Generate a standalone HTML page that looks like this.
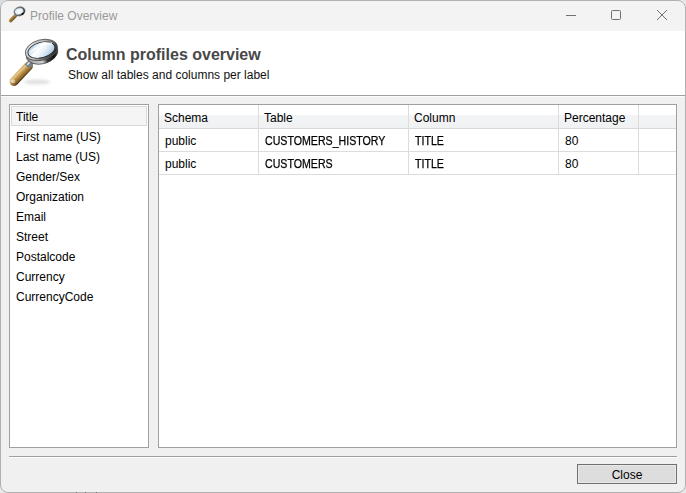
<!DOCTYPE html>
<html><head><meta charset="utf-8">
<style>
*{margin:0;padding:0;box-sizing:border-box}
html,body{width:686px;height:493px;overflow:hidden;background:#e9e9e9}
body{font-family:"Liberation Sans",sans-serif;font-size:12px;color:#000;position:relative}
.a{position:absolute}
.win{left:0;top:0;width:686px;height:493px;border-radius:8px;background:#f0f0f0;overflow:hidden}
.frame{left:0;top:0;width:686px;height:493px;border:1px solid #b0b0b0;border-radius:8px}
.title{left:0;top:0;width:686px;height:31px;background:#f3f3f3}
.ttext{left:30px;top:9px;color:#999;white-space:nowrap}
.hdr{left:0;top:31px;width:686px;height:64px;background:#fff}
.h1{left:66px;top:46px;font-size:16px;font-weight:bold;color:#484848;white-space:nowrap}
.h2{left:68px;top:68px;color:#111;white-space:nowrap}
.list{left:9px;top:104px;width:140px;height:344px;background:#fff;border:1px solid #a0a0a0}
.item{position:absolute;left:6px;height:20px;line-height:22px;white-space:nowrap}
.sel{position:absolute;left:1px;top:1px;width:136px;height:20px;background:#f5f5f5;border:1px solid #dadada}
.tbl{left:158px;top:104px;width:519px;height:344px;background:#fff;border:1px solid #a0a0a0}
.th{position:absolute;left:0;top:0;width:517px;height:24px;background:linear-gradient(#fff 0,#fff 9.5px,#f3f4f6 10.5px,#f0f1f3 23px);border-bottom:1px solid #d8d8d8}
.vl{position:absolute;width:1px;background:#dcdcdc;top:0;height:70px}
.hl{position:absolute;height:1px;background:#dcdcdc;left:0;width:517px}
.c{position:absolute;white-space:nowrap}
.uc{display:inline-block;transform:scaleX(0.885);transform-origin:0 0;-webkit-text-stroke:0.25px #000}
.btn{left:577px;top:464px;width:100px;height:20px;background:#dddddd;border:1px solid #707070;box-shadow:inset 0 0 0 1px #e9e9e9;text-align:center;line-height:20px}
</style></head><body>
<div class="a" style="left:0;top:0;width:10px;height:10px;background:#d2dde6"></div>
<div class="a win">
  <div class="a title"></div>
  <div class="a hdr"></div>
  <div class="a" style="left:0;top:95px;width:686px;height:1px;background:#a0a0a0"></div>
  <div class="a" style="left:0;top:96px;width:686px;height:1px;background:#fcfcfc"></div>
  <div class="a" style="left:9px;top:456px;width:668px;height:1px;background:#a0a0a0"></div>
  <div class="a" style="left:9px;top:457px;width:668px;height:1px;background:#fff"></div>
</div>
<div class="a frame"></div>
<div class="a" style="left:76px;top:492px;width:1px;height:1px;background:#707070"></div>
<div class="a" style="left:85px;top:492px;width:1px;height:1px;background:#707070"></div>
<div class="a" style="left:96px;top:492px;width:1px;height:1px;background:#707070"></div>

<!-- small title icon -->
<svg class="a" style="left:6px;top:4px" width="22" height="22" viewBox="6 4 22 22">
  <defs>
    <linearGradient id="sh" gradientUnits="userSpaceOnUse" x1="11" y1="16" x2="14.5" y2="19.5"><stop offset="0" stop-color="#dcb878"/><stop offset="0.5" stop-color="#b08444"/><stop offset="1" stop-color="#5e4014"/></linearGradient>
    <radialGradient id="sl" cx="0.45" cy="0.5" r="0.6"><stop offset="0" stop-color="#ffffff"/><stop offset="0.6" stop-color="#e8f1f8"/><stop offset="1" stop-color="#a9c7e2"/></radialGradient>
  </defs>
  <line x1="15.6" y1="15.6" x2="10.6" y2="20.6" stroke="url(#sh)" stroke-width="3.6" stroke-linecap="round"/>
  <path d="M10.6 18.8l1.8 1.8M11.8 17.6l1.8 1.8M13 16.4l1.8 1.8M14.2 15.2l1.8 1.8" stroke="#7a5018" stroke-width="0.7" opacity="0.8"/>
  <line x1="15.2" y1="16" x2="16.6" y2="14.6" stroke="#9aa6b0" stroke-width="2.4"/>
  <linearGradient id="srg" gradientUnits="userSpaceOnUse" x1="15" y1="7" x2="24" y2="16"><stop offset="0" stop-color="#b0b0b0"/><stop offset="0.5" stop-color="#707070"/><stop offset="1" stop-color="#1a1a1a"/></linearGradient>
  <ellipse cx="19.5" cy="11.4" rx="5.6" ry="4.4" transform="rotate(-18 19.5 11.4)" fill="url(#srg)" stroke="#3a3a3a" stroke-width="0.5"/>
  <ellipse cx="19.3" cy="11.3" rx="4.3" ry="3.1" transform="rotate(-18 19.3 11.3)" fill="url(#sl)"/>
  <circle cx="22.6" cy="13.8" r="1" fill="#000"/>
</svg>
<div class="a ttext">Profile Overview</div>
<div class="a" style="left:566px;top:15px;width:10px;height:1px;background:#707070"></div>
<div class="a" style="left:611px;top:10px;width:10px;height:10px;border:1px solid #707070;border-radius:1.5px"></div>
<svg class="a" style="left:656px;top:9px" width="12" height="12" viewBox="656 9 12 12"><path d="M657 10L667 20M667 10L657 20" stroke="#707070" stroke-width="1"/></svg>

<!-- big magnifier -->
<svg class="a" style="left:4px;top:34px" width="60" height="60" viewBox="4 34 60 60">
  <defs>
    <filter id="bl" x="-50%" y="-50%" width="200%" height="200%"><feGaussianBlur stdDeviation="1.6"/></filter>
    <linearGradient id="hg" gradientUnits="userSpaceOnUse" x1="17.5" y1="70.5" x2="24" y2="77"><stop offset="0" stop-color="#c9a060"/><stop offset="0.25" stop-color="#e6c888"/><stop offset="0.55" stop-color="#b88c48"/><stop offset="0.85" stop-color="#8a6428"/><stop offset="1" stop-color="#4a3410"/></linearGradient>
    <linearGradient id="rg" gradientUnits="userSpaceOnUse" x1="30" y1="40" x2="50" y2="60"><stop offset="0" stop-color="#e4e4e4"/><stop offset="0.45" stop-color="#bdbdbd"/><stop offset="0.75" stop-color="#6a6a6a"/><stop offset="1" stop-color="#2a2a2a"/></linearGradient>
    <linearGradient id="dg" gradientUnits="userSpaceOnUse" x1="26" y1="55" x2="58" y2="55"><stop offset="0" stop-color="#7a7a7a"/><stop offset="0.2" stop-color="#b8b8b8"/><stop offset="0.45" stop-color="#d0d0d0"/><stop offset="0.6" stop-color="#3a3a3a"/><stop offset="0.85" stop-color="#0c0c0c"/><stop offset="1" stop-color="#505050"/></linearGradient>
    <linearGradient id="lg" gradientUnits="userSpaceOnUse" x1="33" y1="40" x2="49" y2="60"><stop offset="0" stop-color="#7eadd6"/><stop offset="0.18" stop-color="#c6ddef"/><stop offset="0.38" stop-color="#ffffff"/><stop offset="0.55" stop-color="#eef5fb"/><stop offset="0.75" stop-color="#cfe1f0"/><stop offset="1" stop-color="#8db4d8"/></linearGradient>
  </defs>
  <ellipse cx="37" cy="82" rx="13" ry="2.6" fill="#000" opacity="0.12" filter="url(#bl)"/>
  <line x1="28.5" y1="66" x2="14" y2="81.5" stroke="url(#hg)" stroke-width="9" stroke-linecap="round"/>
  <ellipse cx="13" cy="81.4" rx="2.2" ry="1.8" fill="#fff" opacity="0.5"/>
  <line x1="27" y1="66.5" x2="31.5" y2="61.8" stroke="#75828e" stroke-width="6"/>
  <line x1="27.2" y1="64.8" x2="30.4" y2="61.4" stroke="#e6eef4" stroke-width="1.4"/>
  <ellipse cx="42" cy="53.4" rx="16.2" ry="10.4" transform="rotate(-15 42 53.4)" fill="url(#dg)" stroke="#303030" stroke-width="0.6"/>
  <ellipse cx="41.4" cy="50" rx="16.4" ry="10.2" transform="rotate(-15 41.4 50)" fill="url(#rg)" stroke="#505050" stroke-width="0.8"/>
  <ellipse cx="41.4" cy="50" rx="14.2" ry="8" transform="rotate(-15 41.4 50)" fill="#1e1e1e"/>
  <ellipse cx="41.4" cy="50" rx="13.4" ry="7.3" transform="rotate(-15 41.4 50)" fill="url(#lg)"/>
  <path d="M30 52 Q38 45 52 43" stroke="#fff" stroke-width="1.3" fill="none" opacity="0.85"/>
</svg>

<div class="a h1">Column profiles overview</div>
<div class="a h2">Show all tables and columns per label</div>

<div class="a list">
  <div class="sel"></div>
  <div class="item" style="top:1px">Title</div>
  <div class="item" style="top:21px">First name (US)</div>
  <div class="item" style="top:41px">Last name (US)</div>
  <div class="item" style="top:61px">Gender/Sex</div>
  <div class="item" style="top:81px">Organization</div>
  <div class="item" style="top:101px">Email</div>
  <div class="item" style="top:121px">Street</div>
  <div class="item" style="top:141px">Postalcode</div>
  <div class="item" style="top:161px">Currency</div>
  <div class="item" style="top:181px">CurrencyCode</div>
</div>

<div class="a tbl">
  <div class="th"></div>
  <div class="vl" style="left:99px"></div>
  <div class="vl" style="left:249px"></div>
  <div class="vl" style="left:399px"></div>
  <div class="vl" style="left:479px"></div>
  <div class="hl" style="top:46px"></div>
  <div class="hl" style="top:69px"></div>
  <div class="c" style="left:5px;top:6px">Schema</div>
  <div class="c" style="left:105px;top:6px">Table</div>
  <div class="c" style="left:255px;top:6px">Column</div>
  <div class="c" style="left:405px;top:6px">Percentage</div>
  <div class="c" style="left:6px;top:29px">public</div>
  <div class="c" style="left:106px;top:29px"><span class="uc">CUSTOMERS_HISTORY</span></div>
  <div class="c" style="left:256px;top:29px"><span class="uc">TITLE</span></div>
  <div class="c" style="left:406px;top:29px">80</div>
  <div class="c" style="left:6px;top:52px">public</div>
  <div class="c" style="left:106px;top:52px"><span class="uc">CUSTOMERS</span></div>
  <div class="c" style="left:256px;top:52px"><span class="uc">TITLE</span></div>
  <div class="c" style="left:406px;top:52px">80</div>
</div>

<div class="a btn">Close</div>
</body></html>
